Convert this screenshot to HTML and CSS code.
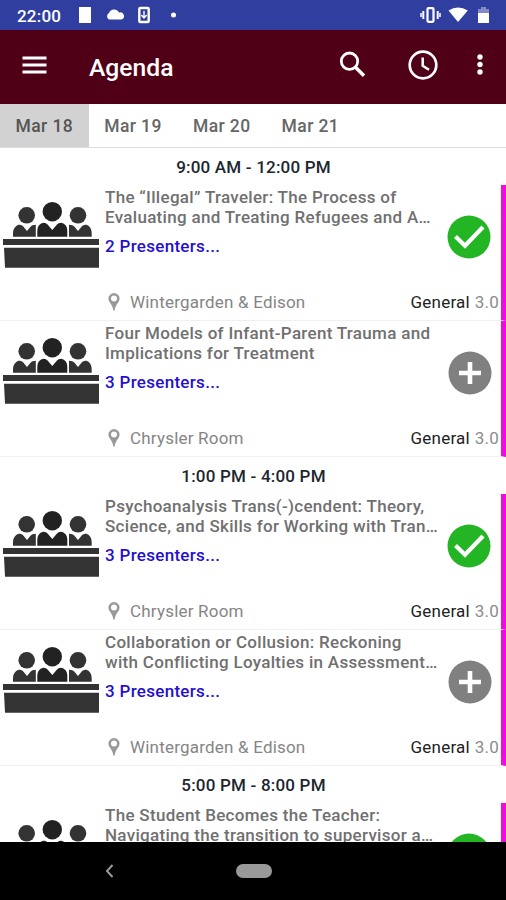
FILE: index.html
```
<!DOCTYPE html>
<html lang="en">
<head>
    <meta charset="UTF-8">
    <meta name="viewport" content="width=device-width, initial-scale=1.0">
    <title>Agenda</title>
    <link rel="stylesheet" href="styles.css">
</head>
<body>
    <svg class="defs">
        <symbol id="panel" viewBox="0 0 96 67">
            <g fill="#333">
                <circle cx="23.7" cy="13.3" r="8.3"/>
                <circle cx="75" cy="13.3" r="8.3"/>
                <path d="M10 34.7V31c0-4 2-7 5.500-8.300c2 0 4 .6 5 2l3.500 4.300l3.500-4.300c1-1.200 2.500-2 5.300-2V34.700z"/>
                <path d="M66 34.700V22.700c2.500 0 4.500.8 5.500 2l3.500 4.300l3.500-4.300c1-1.400 3-2 5-2c3.500 1.300 5.200 4.300 5.200 8.300v3.700z"/>
                <path d="M0 37h96v6H0zM1 45.700h95v20H2z"/>
            </g>
            <g fill="#222">
                <circle cx="49.300" cy="9.700" r="9.700"/>
                <path d="M34.300 34.700V29c0-4.500 2-7.300 6-8.300c2 0 3.500.7 4.500 2l4.500 5.300l4.500-5.300c1-1.300 2.500-2 4.500-2c4 1 6 3.800 6 8.300v5.700z"/>
            </g>
        </symbol>
        <symbol id="pin" viewBox="0 0 12 18">
            <path fill="#999" fill-rule="evenodd" d="M6 0a5.600 5.600 0 0 0-5.600 5.600C.4 9.500 5 12 5.300 17.500h1.400C7 12 11.600 9.500 11.600 5.600A5.600 5.600 0 0 0 6 0zM6 2.600a3 3 0 1 1 0 6a3 3 0 0 1 0-6z"/>
        </symbol>
        <symbol id="check" viewBox="0 0 44 44">
            <circle cx="22" cy="22" r="21.500" fill="#23b523"/>
            <path d="M8.500 21.500l9.500 9.300L36 12" fill="none" stroke="#fff" stroke-width="4.200"/>
        </symbol>
        <symbol id="plus" viewBox="0 0 44 44">
            <circle cx="22" cy="22" r="21.500" fill="#808080"/>
            <path d="M11 22h22M22 11v22" stroke="#fff" stroke-width="4.600"/>
        </symbol>
    </svg>

    <div class="statusbar">
        <span class="clock">22:00</span>
        <svg class="status-left" width="110" height="18" viewBox="0 0 110 18" fill="#fff">
            <path d="M1 1h12v16H1z"/>
            <path d="M31 13.500a3.700 3.700 0 0 1 0-6.500a5.500 5.500 0 0 1 10-.5a3.500 3.500 0 0 1 2.500 7z"/>
            <rect x="61.300" y="2" width="9.400" height="14" fill="none" stroke="#fff" stroke-width="2.400" rx="1"/>
            <path d="M66 5v6M63.300 9l2.700 3l2.700-3" fill="none" stroke="#fff" stroke-width="1.400"/>
            <circle cx="95.500" cy="9" r="2.500"/>
        </svg>
        <svg class="status-right" width="72" height="18" viewBox="0 0 72 18" fill="#fff">
            <rect x="7.500" y="2.200" width="6" height="13.600" fill="none" stroke="#fff" stroke-width="2.200" rx="1"/>
            <path d="M3.300 5v8M17.700 5v8" stroke="#fff" stroke-width="2"/>
            <path d="M1 7v4M20 7v4" stroke="#fff" stroke-width="1.500"/>
            <path d="M28.500 4.500Q38 -1.500 47.800 4.500L38 16z"/>
            <path d="M61 1h5v2h3v5H58V3h3z" opacity=".4"/>
            <path d="M58 7h11v10H58z"/>
        </svg>
    </div>

    <header class="toolbar">
        <svg class="menu" width="26" height="18" viewBox="0 0 26 18">
            <path d="M.5 2h24M.5 9h24M.5 16h24" stroke="#fff" stroke-width="2.800"/>
        </svg>
        <h1>Agenda</h1>
        <svg class="search" width="27" height="27" viewBox="0 0 27 27" fill="none" stroke="#fff">
            <circle cx="10.500" cy="10.200" r="8.200" stroke-width="2.800"/>
            <path d="M16 15.700l9 9" stroke-width="3.600"/>
        </svg>
        <svg class="history" width="30" height="30" viewBox="0 0 30 30" fill="none" stroke="#fff">
            <circle cx="15" cy="15" r="13.300" stroke-width="2.700"/>
            <path d="M14.700 7.500v8.300l6.300 4" stroke-width="2.500"/>
        </svg>
        <svg class="more" width="6" height="21" viewBox="0 0 6 21" fill="#fff">
            <circle cx="3" cy="3" r="2.700"/>
            <circle cx="3" cy="10.500" r="2.700"/>
            <circle cx="3" cy="18" r="2.700"/>
        </svg>
    </header>

    <nav class="tabs">
        <div class="tab active">Mar 18</div>
        <div class="tab">Mar 19</div>
        <div class="tab">Mar 20</div>
        <div class="tab">Mar 21</div>
    </nav>

    <main class="agenda">
        <h2>9:00 AM - 12:00 PM</h2>
        <div class="session">
            <svg class="panel"><use href="#panel"/></svg>
            <div class="info">
                <h3>The “Illegal” Traveler: The Process of<br>Evaluating and Treating Refugees and A…</h3>
                <a class="presenters">2 Presenters...</a>
                <div class="meta">
                    <svg class="pin"><use href="#pin"/></svg>
                    <span class="room">Wintergarden &amp; Edison</span>
                    <span class="type">General</span>
                    <span class="credits">3.0</span>
                </div>
            </div>
            <svg class="mark"><use href="#check"/></svg>
        </div>
        <div class="session">
            <svg class="panel"><use href="#panel"/></svg>
            <div class="info">
                <h3>Four Models of Infant-Parent Trauma and<br>Implications for Treatment</h3>
                <a class="presenters">3 Presenters...</a>
                <div class="meta">
                    <svg class="pin"><use href="#pin"/></svg>
                    <span class="room">Chrysler Room</span>
                    <span class="type">General</span>
                    <span class="credits">3.0</span>
                </div>
            </div>
            <svg class="mark add"><use href="#plus"/></svg>
        </div>

        <h2>1:00 PM - 4:00 PM</h2>
        <div class="session">
            <svg class="panel"><use href="#panel"/></svg>
            <div class="info">
                <h3>Psychoanalysis Trans(-)cendent: Theory,<br>Science, and Skills for Working with Tran…</h3>
                <a class="presenters">3 Presenters...</a>
                <div class="meta">
                    <svg class="pin"><use href="#pin"/></svg>
                    <span class="room">Chrysler Room</span>
                    <span class="type">General</span>
                    <span class="credits">3.0</span>
                </div>
            </div>
            <svg class="mark"><use href="#check"/></svg>
        </div>
        <div class="session">
            <svg class="panel"><use href="#panel"/></svg>
            <div class="info">
                <h3>Collaboration or Collusion: Reckoning<br>with Conflicting Loyalties in Assessment…</h3>
                <a class="presenters">3 Presenters...</a>
                <div class="meta">
                    <svg class="pin"><use href="#pin"/></svg>
                    <span class="room">Wintergarden &amp; Edison</span>
                    <span class="type">General</span>
                    <span class="credits">3.0</span>
                </div>
            </div>
            <svg class="mark add"><use href="#plus"/></svg>
        </div>

        <h2>5:00 PM - 8:00 PM</h2>
        <div class="session">
            <svg class="panel"><use href="#panel"/></svg>
            <div class="info">
                <h3>The Student Becomes the Teacher:<br>Navigating the transition to supervisor a…</h3>
            </div>
            <svg class="mark"><use href="#check"/></svg>
        </div>
    </main>

    <footer class="navbar">
        <svg class="back" width="9" height="14" viewBox="0 0 9 14">
            <path d="M7.500 1L2 7l5.500 6" fill="none" stroke="#999" stroke-width="2"/>
        </svg>
        <div class="home"></div>
    </footer>
</body>
</html>
```
FILE: styles.css
```
* {
    box-sizing: border-box;
}
body {
    margin: 0;
    height: 900px;
    display: flex;
    flex-direction: column;
    overflow: hidden;
    background: #fff;
    font-family: Roboto, sans-serif;
}
svg {
    display: block;
    flex: none;
}
h1, h2, h3 {
    margin: 0;
    font-weight: 500;
}
.defs {
    display: none;
}
.statusbar {
    flex: none;
    height: 30px;
    padding: 0 15px 0 17px;
    display: flex;
    align-items: center;
    background: #303f9f;
    color: #fff;
}
.clock {
    width: 61px;
    padding-top: 1px;
    font-size: 17px;
    font-weight: 500;
    letter-spacing: 0.2px;
}
.status-right {
    margin-left: auto;
    margin-right: -1px;
}
.toolbar {
    flex: none;
    height: 74px;
    padding: 0 23px;
    display: flex;
    align-items: center;
    background: #500016;
    color: #fff;
}
.menu {
    margin: -5px 0 0 -1px;
}
.toolbar h1 {
    margin-left: 41px;
    padding-top: 2px;
    font-size: 24.7px;
    line-height: 30px;
}
.search {
    margin: -6px 0 0 auto;
}
.history {
    margin: -5px 0 0 42px;
}
.more {
    margin: -5px 0 0 39px;
}
.tabs {
    flex: none;
    height: 44px;
    display: flex;
    border-bottom: 1px solid #ddd;
}
.tab {
    width: 88.7px;
    line-height: 45px;
    text-align: center;
    font-size: 17.5px;
    font-weight: 500;
    letter-spacing: 0.4px;
    color: #666;
}
.tab.active {
    background: #d2d2d2;
    color: #555;
}
.agenda {
    flex: 1;
    min-height: 0;
    overflow: hidden;
}
.agenda h2 {
    height: 37px;
    line-height: 38px;
    padding-left: 1px;
    text-align: center;
    font-size: 17px;
    letter-spacing: 0.2px;
    color: #1c2630;
}
.session {
    height: 136px;
    display: flex;
    align-items: flex-start;
    border-right: 5px solid #ee0ddd;
    border-bottom: 1px solid #f0f0f0;
}
.panel {
    width: 96px;
    height: 67px;
    margin: 17px 6px 0 3px;
}
.info {
    flex: 1;
    min-width: 0;
    padding-top: 2px;
}
.info h3 {
    font-size: 17px;
    line-height: 20px;
    letter-spacing: 0.3px;
    color: #707070;
    white-space: nowrap;
}
.presenters {
    display: block;
    margin-top: 9px;
    line-height: 20px;
    font-size: 17px;
    font-weight: 500;
    letter-spacing: 0.3px;
    color: #2510cf;
}
.meta {
    margin: 36px -52px 0 3px;
    display: flex;
    align-items: center;
    line-height: 20px;
    font-size: 17px;
    letter-spacing: 0.2px;
}
.pin {
    width: 12px;
    height: 18px;
    margin: -1px 10px 0 0;
}
.room {
    color: #858585;
}
.type {
    margin-left: auto;
    color: #222;
}
.credits {
    margin-left: 5px;
    color: #8c8c8c;
}
.mark {
    width: 44px;
    height: 44px;
    margin: 30px 10px 0 0;
}
.mark.add {
    margin-left: 1px;
    margin-right: 9px;
}
.navbar {
    flex: none;
    height: 58px;
    padding-left: 105px;
    display: flex;
    align-items: center;
    background: #000;
}
.home {
    width: 36px;
    height: 14px;
    margin-left: 122px;
    border-radius: 7px;
    background: #999;
}
```
